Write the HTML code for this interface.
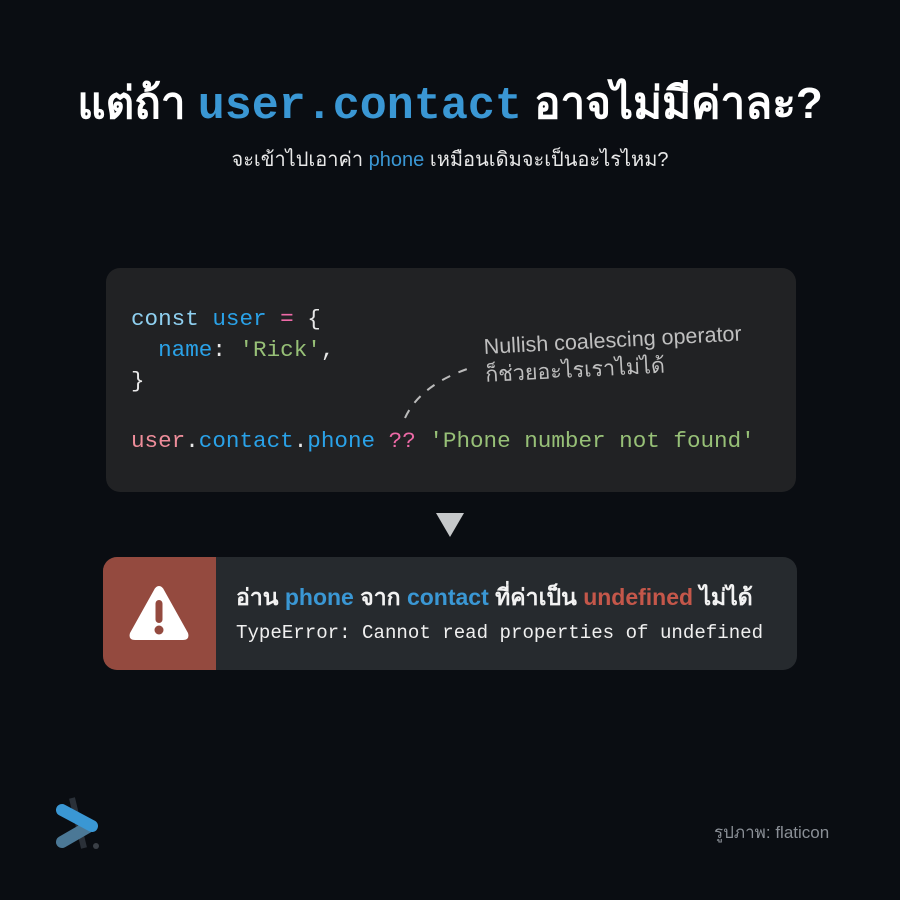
<!DOCTYPE html>
<html><head><meta charset="utf-8"><style>
*{margin:0;padding:0;box-sizing:border-box}
body{width:900px;height:900px;background:#0a0d12;position:relative;overflow:hidden;font-family:"Liberation Sans","DejaVu Sans",sans-serif;color:#fff}
.abs{position:absolute;white-space:pre}
.mono{font-family:"Liberation Mono","DejaVu Sans Mono",monospace}
.t1{left:0;width:900px;text-align:center;top:68px;font-size:44px;font-weight:bold}
.t2{left:0;width:900px;text-align:center;top:143px;font-size:20px;color:#e8e8e8}
.blue{color:#3a97d4}
.code{left:106px;top:268px;width:690px;height:224px;background:#212224;border-radius:14px}
.cl{position:absolute;left:131px;font-size:22.6px;line-height:30px}
.k{color:#8fd0f0}.v{color:#2aa2e8}.p{color:#ee6aa7}.s{color:#97c077}.w{color:#e8e8e8}.u{color:#ee8d9a}
.err{left:103px;top:557px;width:694px;height:113px;background:#262a2e;border-radius:14px;overflow:hidden}
.red{position:absolute;left:0;top:0;width:113px;height:113px;background:#944a3f}
</style></head><body>
<div class="abs t1">แต่ถ้า <span class="mono blue" style="font-size:45px">user.contact</span> อาจไม่มีค่าละ?</div>
<div class="abs t2">จะเข้าไปเอาค่า <span class="blue">phone</span> เหมือนเดิมจะเป็นอะไรไหม?</div>

<div class="abs code"></div>
<div class="abs cl mono" style="top:304px"><span class="k">const</span> <span class="v">user</span> <span class="p">=</span> <span class="w">{</span></div>
<div class="abs cl mono" style="top:335px"><span class="w">  </span><span class="v">name</span><span class="w">: </span><span class="s">'Rick'</span><span class="w">,</span></div>
<div class="abs cl mono" style="top:366px"><span class="w">}</span></div>
<div class="abs cl mono" style="top:426px"><span class="u">user</span><span class="w">.</span><span class="v">contact</span><span class="w">.</span><span class="v">phone</span> <span class="p">??</span> <span class="s">'Phone number not found'</span></div>
<div class="abs" style="left:483px;top:333px;font-size:21.5px;color:#bfbfbf;transform:rotate(-3deg);transform-origin:left top;line-height:28px">Nullish coalescing operator
ก็ช่วยอะไรเราไม่ได้</div>
<svg class="abs" style="left:400px;top:360px" width="80" height="65"><path d="M5 58 Q20 25 70 8" stroke="#bbb" stroke-width="2" fill="none" stroke-dasharray="9 9"/></svg>

<svg class="abs" style="left:436px;top:513px" width="28" height="24"><path d="M0 0H28L14 24Z" fill="#c6c8ca"/></svg>

<div class="abs err"><div class="red"></div></div>
<svg class="abs" style="left:127px;top:583px" width="64" height="60"><path d="M32 3 Q35 3 37 7 L61 50 Q63 57 56 57 H8 Q1 57 3 50 L27 7 Q29 3 32 3Z" fill="#fff"/><rect x="28.5" y="17" width="7" height="23" rx="3.5" fill="#944a3f"/><circle cx="32" cy="47" r="4.5" fill="#944a3f"/></svg>
<div class="abs" style="left:236px;top:580px;font-size:23px;font-weight:bold;color:#f2f2f2">อ่าน <span class="blue">phone</span> จาก <span class="blue">contact</span> ที่ค่าเป็น <span style="color:#c4574a">undefined</span> ไม่ได้</div>
<div class="abs mono" style="left:236px;top:622px;font-size:19.1px;color:#f0f0f0">TypeError: Cannot read properties of undefined</div>

<svg class="abs" style="left:52px;top:795px" width="52" height="60"><path d="M20 3 L32 53" stroke="#2a3038" stroke-width="6"/><path d="M10 47 L36 32" stroke="#4b7896" stroke-width="12" stroke-linecap="round"/><path d="M10 15 L40 31" stroke="#3a97d4" stroke-width="12" stroke-linecap="round"/><circle cx="44" cy="51" r="3" fill="#3a3f46"/></svg>
<div class="abs" style="left:714px;top:819px;font-size:17px;color:#8a8f96">รูปภาพ: flaticon</div>
</body></html>
